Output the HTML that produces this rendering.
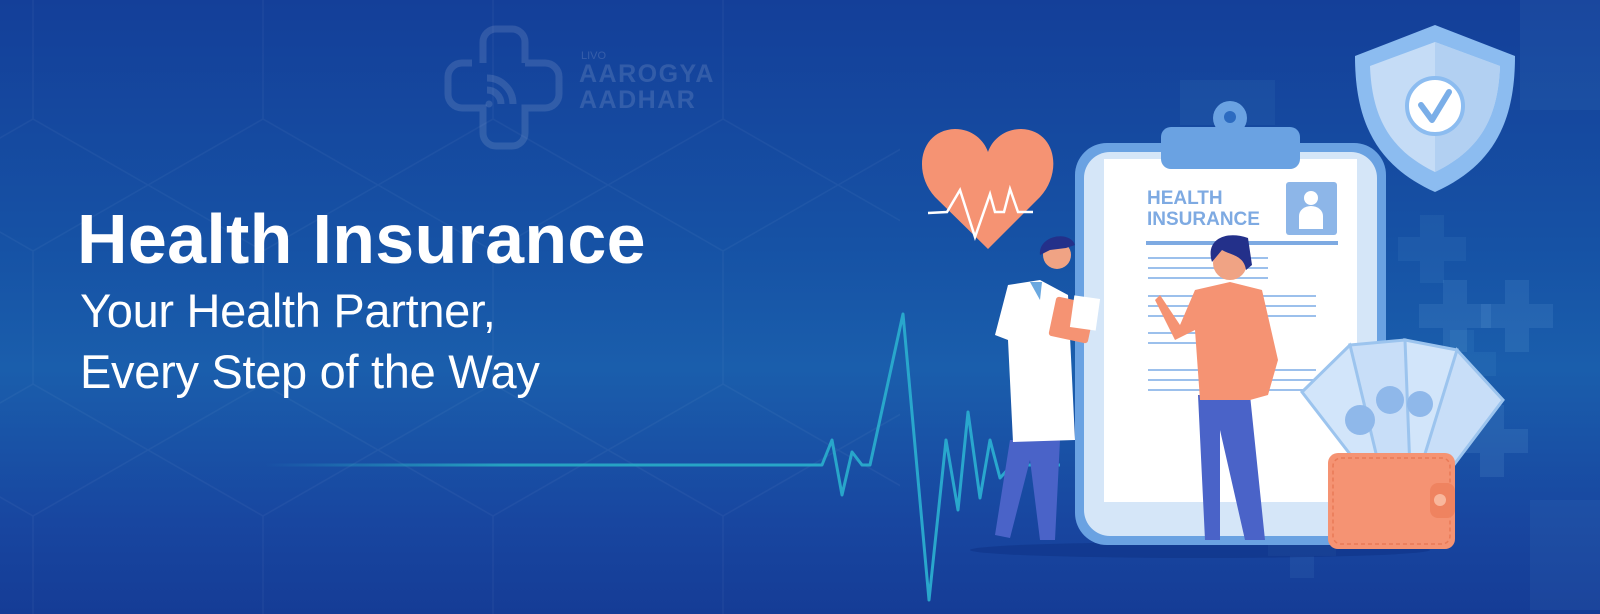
<!DOCTYPE html>
<html><head><meta charset="utf-8"><style>
html,body{margin:0;padding:0}
body{width:1600px;height:614px;overflow:hidden;position:relative;font-family:"Liberation Sans",Arial,sans-serif;
background:linear-gradient(180deg,#143f99 0%,#1652a5 40%,#1a5eac 60%,#1846a0 85%,#153c96 100%);}
.t{position:absolute;color:#fff;white-space:nowrap}
</style></head><body>
<svg width="1600" height="614" style="position:absolute;left:0;top:0">
<defs>
<pattern id="hex" width="230" height="265" patternUnits="userSpaceOnUse" x="33" y="-80">
<path d="M0 66 L115 0 L230 66 M0 66 L0 199 L115 265 L230 199 L230 66 M115 0 L115 -67 M115 265 L115 332" fill="none" stroke="rgba(255,255,255,0.04)" stroke-width="1.5"/>
</pattern>
<linearGradient id="pl" x1="0" x2="1"><stop offset="0" stop-color="#29b5c8" stop-opacity="0"/><stop offset="0.3" stop-color="#29b5c8" stop-opacity="0.8"/><stop offset="1" stop-color="#2aa8d0"/></linearGradient>
</defs>
<rect x="0" y="0" width="900" height="614" fill="url(#hex)"/>
<g fill="rgba(120,180,230,0.14)">
<path d="M1443 280h24v24h24v24h-24v24h-24v-24h-24v-24h24z"/>
<path d="M1505 280h24v24h24v24h-24v24h-24v-24h-24v-24h24z"/>
<path d="M1480 405h24v24h24v24h-24v24h-24v-24h-24v-24h24z"/>
<path d="M1420 215h24v22h22v24h-22v22h-24v-22h-22v-24h22z" opacity=".6"/>
<path d="M1450 330h24v22h22v24h-22v22h-24v-22h-22v-24h22z" opacity=".6"/>
<path d="M1290 510h24v22h22v24h-22v22h-24v-22h-22v-24h22z" opacity=".6"/>
<rect x="1180" y="80" width="95" height="45" opacity=".5"/>
<rect x="1520" y="0" width="80" height="110" opacity=".5"/>
<rect x="1530" y="500" width="70" height="110" opacity=".5"/>
</g>
<g fill="none" stroke="rgba(255,255,255,0.12)" stroke-width="7">
<path d="M483 63 V42 a13 13 0 0 1 13 -13 h16 a13 13 0 0 1 13 13 V63 M525 63 h20 a14 14 0 0 1 14 14 v17 a14 14 0 0 1 -14 14 h-20 V133 a13 13 0 0 1 -13 13 h-16 a13 13 0 0 1 -13 -13 V108 h-21 a14 14 0 0 1 -14 -14 v-17 a14 14 0 0 1 14 -14 h10"/>
<path d="M487 78 a26 26 0 0 1 26 26 M487 90 a14 14 0 0 1 14 14"/>
</g>
<circle cx="489" cy="104" r="3.5" fill="rgba(255,255,255,0.12)"/>
<polyline points="265,465 822,465 832,440 842,495 852,452 862,465 870,465 903,314 929,600 946,440 958,510 968,412 980,498 990,440 1000,478 1012,465 1060,465" fill="none" stroke="url(#pl)" stroke-width="3" stroke-linejoin="round"/>
<ellipse cx="1200" cy="550" rx="230" ry="8" fill="rgba(10,40,120,0.35)"/>
<rect x="1075" y="143" width="311" height="402" rx="32" fill="#6aa2e2"/>
<rect x="1084" y="152" width="293" height="384" rx="26" fill="#d5e6f8"/>
<rect x="1104" y="159" width="253" height="343" fill="#fff"/>
<circle cx="1230" cy="118" r="17" fill="#6aa2e2"/><circle cx="1230" cy="117" r="6" fill="#2d6bc0"/>
<rect x="1161" y="127" width="139" height="42" rx="10" fill="#6aa2e2"/>
<text x="1147" y="204" font-family="Liberation Sans,Arial" font-weight="bold" font-size="19" fill="#7eaae2">HEALTH</text>
<text x="1147" y="225" font-family="Liberation Sans,Arial" font-weight="bold" font-size="19" fill="#7eaae2">INSURANCE</text>
<rect x="1286" y="182" width="51" height="53" rx="3" fill="#8db6e8"/>
<circle cx="1311" cy="198" r="7" fill="#fff"/><path d="M1299 229 v-13 a12 10 0 0 1 24 0 v13z" fill="#fff"/>
<rect x="1146" y="241" width="192" height="4" fill="#7eaae2"/>
<g fill="#9cc0ec">
<rect x="1148" y="257" width="120" height="2"/><rect x="1148" y="267" width="120" height="2"/><rect x="1148" y="277" width="120" height="2"/>
<rect x="1148" y="295" width="168" height="2"/><rect x="1148" y="305" width="168" height="2"/><rect x="1148" y="315" width="168" height="2"/>
<rect x="1148" y="332" width="120" height="2"/><rect x="1148" y="342" width="120" height="2"/>
<rect x="1148" y="369" width="168" height="2"/><rect x="1148" y="379" width="168" height="2"/><rect x="1148" y="389" width="168" height="2"/>
</g>
<path d="M988 249 L935 197 C912 172 920 130 955 129 C972 129 984 140 988 152 C992 140 1004 129 1021 129 C1056 130 1063 172 1040 197 Z" fill="#f59373"/>
<polyline points="928,213 947,212 960,190 975,237 990,194 995,212 1004,212 1010,189 1018,212 1033,212" fill="none" stroke="#fff" stroke-width="2.5"/>
<path d="M1435 25 L1515 56 C1515 120 1495 165 1435 192 C1375 165 1355 120 1355 56 Z" fill="#8cbcf0"/>
<path d="M1435 42 L1500 66 C1498 118 1480 150 1435 172 C1390 150 1372 118 1370 66 Z" fill="#c5dcf6"/>
<path d="M1435 42 L1500 66 C1498 118 1480 150 1435 172 Z" fill="#b2d0f2"/>
<circle cx="1435" cy="106" r="28" fill="#fff" stroke="#8cbcf0" stroke-width="4"/>
<polyline points="1421,105 1432,120 1449,92" fill="none" stroke="#7aaee8" stroke-width="6" stroke-linecap="round" stroke-linejoin="round"/>
<g stroke="#9cc4ee" stroke-width="3">
<path d="M1302 392 L1350 345 L1412 455 L1370 480 Z" fill="#d2e5fa"/>
<path d="M1350 345 L1405 340 L1435 470 L1380 470 Z" fill="#c8def8"/>
<path d="M1405 340 L1457 350 L1440 470 L1410 470 Z" fill="#d2e5fa"/>
<path d="M1457 350 L1503 400 L1450 470 L1420 470 Z" fill="#c8def8"/>
</g>
<circle cx="1360" cy="420" r="15" fill="#8fb8ea"/><circle cx="1390" cy="400" r="14" fill="#8fb8ea"/><circle cx="1420" cy="404" r="13" fill="#8fb8ea"/>
<rect x="1328" y="453" width="127" height="96" rx="10" fill="#f59373"/>
<rect x="1333" y="458" width="117" height="86" rx="8" fill="none" stroke="#e97a57" stroke-width="1.5" stroke-dasharray="4 3"/>
<rect x="1430" y="483" width="25" height="35" rx="8" fill="#ef8360"/>
<circle cx="1440" cy="500" r="6" fill="#f9b79c"/>
<path d="M1010 440 L995 535 L1010 538 L1030 460 L1040 540 L1055 540 L1060 440 Z" fill="#4a63c8"/>
<path d="M1008 285 L1040 280 L1068 295 L1075 440 L1013 442 L1008 340 L995 335 Z" fill="#fff"/>
<path d="M1030 282 L1042 282 L1040 300 Z" fill="#6aa8e0"/>
<circle cx="1057" cy="255" r="14" fill="#f0a384"/>
<path d="M1040 255 C1038 235 1070 230 1075 245 L1066 248 L1050 250 Z" fill="#23308a"/>
<rect x="1052" y="300" width="40" height="40" rx="3" fill="#f59373" transform="rotate(12 1072 320)"/>
<rect x="1072" y="297" width="26" height="32" fill="#fff" transform="rotate(8 1085 313)"/>
<path d="M1198 395 L1205 540 L1220 540 L1220 430 L1245 540 L1265 540 L1250 395 Z" fill="#4a63c8"/>
<path d="M1195 290 L1230 282 L1262 290 L1278 360 L1268 395 L1250 400 L1200 400 L1195 330 L1175 340 L1155 300 L1160 295 L1180 325 Z" fill="#f59373"/>
<circle cx="1230" cy="263" r="17" fill="#f0a384"/>
<path d="M1212 262 C1205 240 1225 230 1248 238 L1252 265 L1246 270 C1244 255 1230 255 1222 250 Z" fill="#23308a"/>
</svg>
<div class="t" style="left:77px;top:199px;font-size:70px;font-weight:bold;letter-spacing:0.3px">Health Insurance</div>
<div class="t" style="left:80px;top:283px;font-size:47px;letter-spacing:-0.3px">Your Health Partner,</div>
<div class="t" style="left:80px;top:344px;font-size:47px;letter-spacing:-0.3px">Every Step of the Way</div>
<div class="t" style="left:581px;top:50px;font-size:11px;color:rgba(255,255,255,0.14)">LIVO</div>
<div class="t" style="left:579px;top:61px;font-size:25px;font-weight:bold;color:rgba(255,255,255,0.13);letter-spacing:1.5px;line-height:26px">AAROGYA<br>AADHAR</div>
</body></html>
